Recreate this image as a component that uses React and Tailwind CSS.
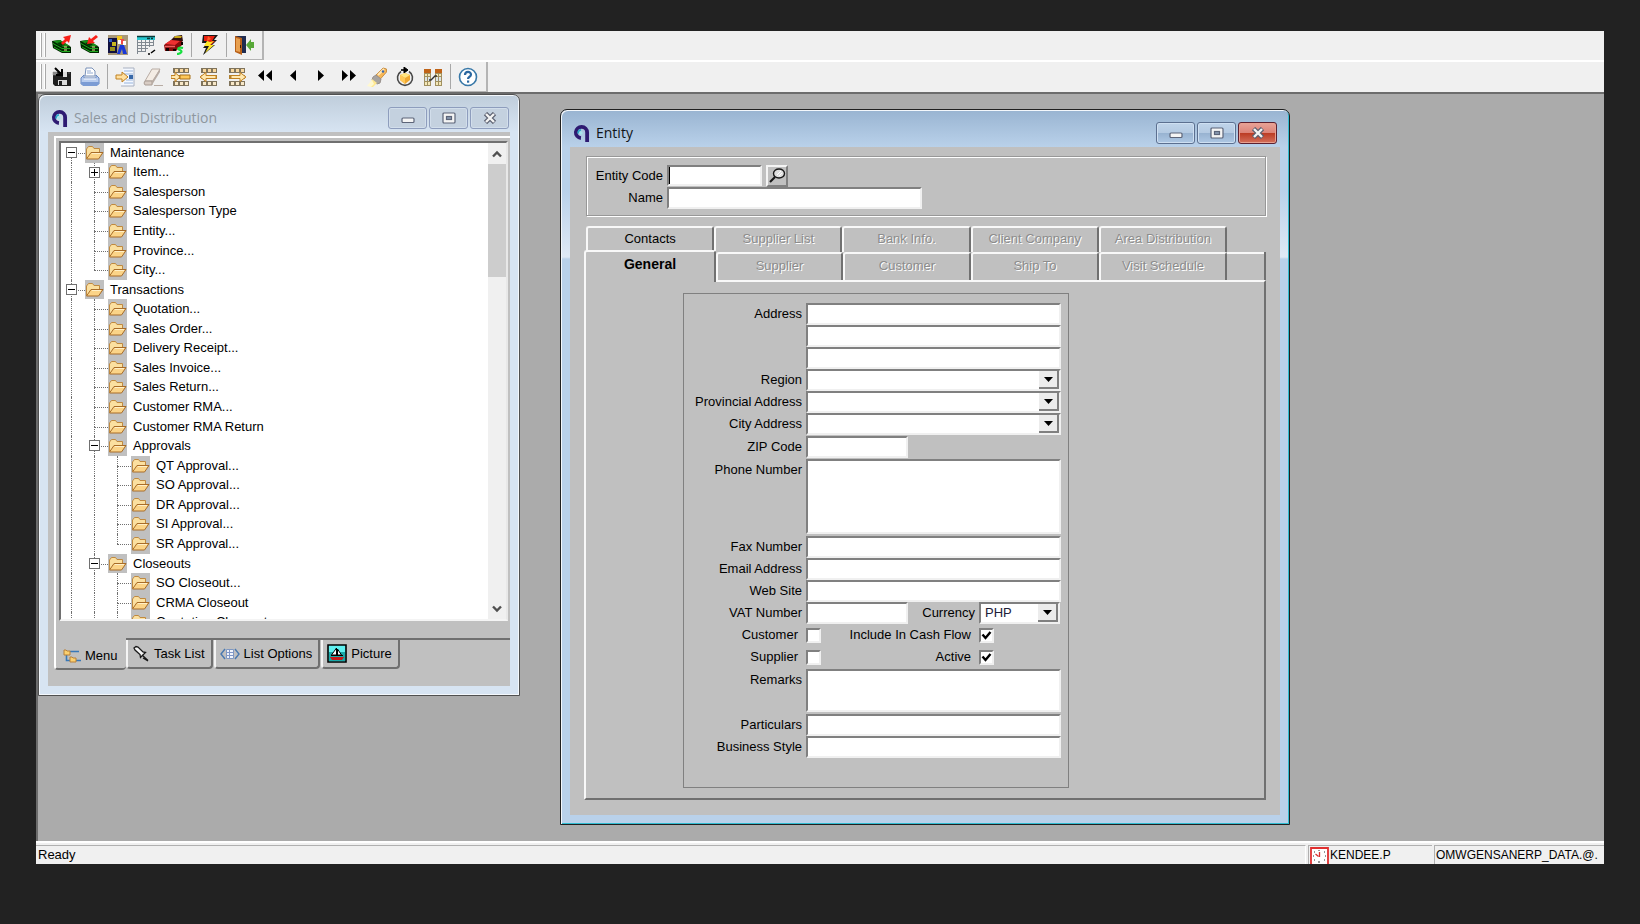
import React, { useState } from 'react';

const TREE = [
  { level: 0, label: 'Maintenance', toggle: '-', first: true },
  { level: 1, label: 'Item...', toggle: '+' },
  { level: 1, label: 'Salesperson' },
  { level: 1, label: 'Salesperson Type' },
  { level: 1, label: 'Entity...' },
  { level: 1, label: 'Province...' },
  { level: 1, label: 'City...', last: true },
  { level: 0, label: 'Transactions', toggle: '-' },
  { level: 1, label: 'Quotation...' },
  { level: 1, label: 'Sales Order...' },
  { level: 1, label: 'Delivery Receipt...' },
  { level: 1, label: 'Sales Invoice...' },
  { level: 1, label: 'Sales Return...' },
  { level: 1, label: 'Customer RMA...' },
  { level: 1, label: 'Customer RMA Return' },
  { level: 1, label: 'Approvals', toggle: '-' },
  { level: 2, label: 'QT Approval...' },
  { level: 2, label: 'SO Approval...' },
  { level: 2, label: 'DR Approval...' },
  { level: 2, label: 'SI Approval...' },
  { level: 2, label: 'SR Approval...', last: true },
  { level: 1, label: 'Closeouts', toggle: '-' },
  { level: 2, label: 'SO Closeout...' },
  { level: 2, label: 'CRMA Closeout' },
  { level: 2, label: 'Quotation Closeout' },
];

/* ---------- toolbar icons ---------- */

const Icon = ({ children, size = 20 }) => (
  <svg width={size} height={size} viewBox="0 0 20 20" fill="none" aria-hidden="true">
    {children}
  </svg>
);

const Cash = () => (
  <>
    <path d="M0 6l8-1 11 7v6h-9L1 13z" fill="#002800" />
    <path d="M1 6l7-1 10 6-7 1z" fill="#189018" />
    <path d="M5 8l4-1 4 3-4 1z" fill="#003800" />
    <path d="M1 8.500l9 5h8M2 12l8 4.500h8" stroke="#20a820" />
    <path d="M12 12h3M12 15h3" stroke="#f0e68c" />
  </>
);

const MoneyOutIcon = () => (
  <Icon>
    <Cash />
    <path d="M9 8l4-4-2-2 8-2-2 8-2-2-4 4z" fill="#f82018" />
  </Icon>
);

const MoneyInIcon = () => (
  <Icon>
    <Cash />
    <path d="M18 2l-5 4 2 2-8 1 2-7 2 2 5-4z" fill="#f82018" />
  </Icon>
);

const WorkerIcon = () => (
  <Icon>
    <path d="M0 0h20v20H0z" fill="#a89878" />
    <path d="M0 3h9v15H0z" fill="#101040" />
    <path d="M1 4h3v3H1z" fill="#3060c0" />
    <path d="M2 12h5v4H2z" fill="#98901c" />
    <path d="M4 7h4v4H4z" fill="#c8b820" />
    <path d="M9 1h5v4H9z" fill="#f0c820" />
    <path d="M12 4h4v5h-4z" fill="#f04848" />
    <path d="M10 5h3v4h-3zM15 6h3v4h-3z" fill="#fff" />
    <path d="M12 10h4l3 9h-4l-1-5-2 5h-3z" fill="#1838d8" />
  </Icon>
);

const SheetIcon = () => (
  <Icon>
    <path d="M1 1h18v4H1z" fill="#28c8d0" />
    <path d="M1 1.500h18M11 3.500h3M15 3.500h2" stroke="#083838" strokeWidth="1.500" />
    <path d="M1.500 5v14M5.500 5v12M9.500 5v12M13.500 5v7M17.500 5v6M1 7.500h17M1 10.500h17M1 13.500h11M1 16.500h9" stroke="#808890" />
    <path d="M12 19h2M15 18l4-3" stroke="#000" strokeWidth="1.500" />
  </Icon>
);

const CarIcon = () => (
  <Icon>
    <path d="M7 5l4-4 7-1 1 6-6 4z" fill="#301010" />
    <path d="M11 1h7l-1 2h-7z" fill="#c8a818" />
    <path d="M0 10l7-5 11 1v4l-6 6H1z" fill="#880c0c" />
    <path d="M1 9l6-4 9 1-5 4z" fill="#f03030" />
    <path d="M1 11.500h10" stroke="#f06060" strokeWidth="1.500" />
    <path d="M2 13h3v3H2zM9 14h3v2H9zM17 7h2v3h-2z" fill="#100000" />
    <path d="M19 13c-5-1-6 1-3 2s1 4-3 4" stroke="#18e040" strokeWidth="2.200" />
  </Icon>
);

const BoltIcon = () => (
  <Icon>
    <path d="M4 0h15l-4 5h3l-5 5h3L4 20l3-7H4l4-5H3z" fill="#181818" />
    <path d="M5 1h11l-3 5h3l-4 4H6l3-4H5z" fill="#e82010" />
    <path d="M8 6L5 11h5l-4 7 9-8h-4l4-4-4 1z" fill="#ffe828" />
    <path d="M9 1l3 3-4 2z" fill="#ff6028" />
  </Icon>
);

const DoorIcon = () => (
  <Icon>
    <path d="M1 1h11v17H6z" fill="#202c50" />
    <path d="M1 1l7 2v17l-7-3z" fill="#b86018" />
    <path d="M2 3l4 1v13l-4-1z" fill="#e8a050" />
    <path d="M6.500 10v3" stroke="#402000" />
    <path d="M20 7v6h-3v3l-5-6 5-6v3z" fill="#58a838" />
  </Icon>
);

const SaveIcon = () => (
  <Icon>
    <path d="M1 5h18v14H3l-2-2z" fill="#202020" />
    <path d="M11 5h4v5h-4zM6 13h9v5H6z" fill="#dcdcdc" />
    <path d="M7 14h3v4H7z" fill="#202020" />
    <path d="M1 5h4v3H1zM16 6h2" fill="#888" stroke="#888" strokeWidth="0.500" />
    <path d="M3 1l6 6M10 2v6H4" stroke="#000" strokeWidth="2" />
  </Icon>
);

const PrintIcon = () => (
  <Icon>
    <path d="M5 9L6 1h6l3 3v5z" fill="#fff" stroke="#7890b8" />
    <path d="M7 4h4M7 6h6" stroke="#90a8d0" />
    <path d="M1 11l3-3v3h12V8l3 3v6H1z" fill="#b8ccee" stroke="#6888c0" />
    <path d="M1 15h18v2l-2 2H3l-2-2z" fill="#7c9cd4" />
    <path d="M4 12h12" stroke="#fff" />
  </Icon>
);

const GotoIcon = () => (
  <Icon>
    <path d="M8 1h11v18H6" fill="#f4f8ff" stroke="#a8b0c0" />
    <path d="M9 4h9M9 7h9M11 13h7M9 16h9" stroke="#98b4dc" />
    <path d="M14 8h4v4h-4z" fill="#3868a8" />
    <path d="M1 8h6V5l6 5-6 5v-3H1z" fill="#ffe0a0" stroke="#c08020" />
  </Icon>
);

const EraserIcon = () => (
  <Icon>
    <path d="M9 2h8l-7 12H2z" fill="#f4ece4" stroke="#b8aca4" />
    <path d="M2 14h7v4H2l-1-2z" fill="#d8ccc4" stroke="#a89c94" />
    <path d="M17 2v3L9 18v-4z" fill="#b8aca4" />
    <path d="M11 18.500h9" stroke="#b8aca4" />
  </Icon>
);

const Grid = () => (
  <>
    <path d="M2 1h16v5H2zM2 14h16v5H2z" fill="#80745c" />
    <path d="M2 8h16v4H2z" fill="#b08030" />
    <path d="M4 2h3v3H4zM9 2h3v3H9zM14 2h3v3h-3z" fill="#f8d8a0" />
    <path d="M4 15h3v3H4zM9 15h3v3H9zM14 15h3v3h-3z" fill="#f8e8c8" />
    <path d="M4 9h3v2H4zM9 9h3v2H9zM14 9h3v2h-3z" fill="#f8d080" />
  </>
);

const RowInsertIcon = () => (
  <Icon>
    <Grid />
    <path d="M9 8h10v4H9z" fill="#ffc858" stroke="#a87018" />
    <path d="M0 8.500h4V5.500l5 4.500-5 4.500v-3H0z" fill="#ffe8b0" stroke="#c08020" />
  </Icon>
);

const RowRemoveIcon = () => (
  <Icon>
    <Grid />
    <path d="M17 8.500H7V5.500L1 10l6 4.500v-3h10z" fill="#ffe8b0" stroke="#c08020" />
  </Icon>
);

const RowAppendIcon = () => (
  <Icon>
    <Grid />
    <path d="M4 8.500h9V5.500l6 4.500-6 4.500v-3H4z" fill="#ffe8b0" stroke="#c08020" />
  </Icon>
);

const FirstIcon = () => (
  <Icon>
    <path d="M9 3v11L3 8.500zM17 3v11l-6-5.500z" fill="#000" />
  </Icon>
);
const PrevIcon = () => (
  <Icon>
    <path d="M13 3v11L7 8.500z" fill="#000" />
  </Icon>
);
const NextIcon = () => (
  <Icon>
    <path d="M7 3v11l6-5.500z" fill="#000" />
  </Icon>
);
const LastIcon = () => (
  <Icon>
    <path d="M3 3v11l6-5.500zM11 3v11l6-5.500z" fill="#000" />
  </Icon>
);

const FlashlightIcon = () => (
  <Icon>
    <path d="M9 8l7-7 3.500 1v3l-7 8z" fill="#f8b858" stroke="#c89048" />
    <path d="M11 8l6-6" stroke="#ffe8b8" strokeWidth="2" />
    <circle cx="16" cy="4.500" r="1.200" fill="#3868b0" />
    <path d="M6 10l3-2 5 4-1 4-3 1-5-4z" fill="#a8a4a0" stroke="#98908c" />
    <path d="M5 12l5 4-4 4H3z" fill="#ffe890" />
    <path d="M0 19l5-6 2 4-3 3z" fill="#fff8d0" />
  </Icon>
);

const RefreshIcon = () => (
  <Icon>
    <path d="M14 4.500a7.500 7.500 0 1 1-8 0" stroke="#484848" strokeWidth="1.600" />
    <path d="M9 0v6M9 0l4 3-4 3" fill="#000" stroke="#000" />
    <path d="M6 3h5" stroke="#000" strokeWidth="1.600" />
    <path d="M10 6l5 2v5l-5 4-5-4V8z" fill="#f0a830" />
    <path d="M10 6l5 2-5 3-5-3z" fill="#ffe480" />
    <path d="M10 11v6l-5-4V8z" fill="#ffc858" />
  </Icon>
);

const LinkTablesIcon = () => (
  <Icon>
    <path d="M1 2h7v17H1zM12 2h7v17h-7z" fill="#a09060" />
    <path d="M1 2h7v4H1zM12 2h7v4h-7z" fill="#c06418" />
    <path d="M2 7h2v2H2zM5 7h2v2H5zM13 7h2v2h-2zM16 7h2v2h-2zM2 15h2v3H2zM5 15h2v3H5zM13 15h2v3h-2zM16 15h2v3h-2z" fill="#f4e8b8" />
    <path d="M2 10h2v4H2zM5 10h2v4H5zM13 10h2v4h-2zM16 10h2v4h-2z" fill="#dce4e8" />
    <path d="M6 13h2l4-4h2" stroke="#303030" strokeWidth="1.300" />
  </Icon>
);

const HelpIcon = () => (
  <Icon>
    <circle cx="10" cy="10" r="8.500" fill="#fff" stroke="#3878a8" strokeWidth="1.600" />
    <path d="M7 8c0-4 6-4 6-.5C13 10 10 9.500 10 12" stroke="#2c68a0" strokeWidth="2.200" />
    <path d="M9 13.500h2.200v2.200H9z" fill="#2c68a0" />
  </Icon>
);

/* ---------- other icons ---------- */

const AppLogo = () => (
  <svg width="17" height="18" viewBox="2 1 15 16" fill="none" aria-hidden="true">
    <path d="M9 13.500A5 5 0 1 1 14.500 8.500V17" stroke="#2e1a72" strokeWidth="3.400" />
    <path d="M6.500 9.500A3 3 0 0 1 9 6.200" stroke="#28a8c8" strokeWidth="1.400" />
    <circle cx="9" cy="9" r="1.500" fill="#a8e4ec" />
  </svg>
);

const FolderIcon = () => (
  <svg width="19" height="16" viewBox="0 0 19 16" fill="none" aria-hidden="true">
    <path d="M1.500 13.500V4l2-2.500h4L9 3.500h5.500v4" fill="#fbe0a0" stroke="#c08a40" />
    <path d="M1.500 14L6 7.500h12L13.500 14z" fill="#fbd488" stroke="#a86c28" />
    <path d="M7 8.500h9" stroke="#fff0c8" />
  </svg>
);

const MenuTreeIcon = () => (
  <svg width="18" height="16" viewBox="0 0 18 16" fill="none" aria-hidden="true">
    <path d="M3.500 6v6.500H7M7 3.500h9M13 12.500h5" stroke="#3878b8" strokeWidth="1.600" />
    <path d="M1 2h2l1 1h3v4H1zM7 9h2l1 1h3v4H7z" fill="#fbd070" stroke="#b88038" />
  </svg>
);

const PinIcon = () => (
  <svg width="18" height="18" viewBox="0 0 18 18" fill="none" aria-hidden="true">
    <path d="M2 3l2-1.500 2 .5 5 5 2.500.5-5 5L8 9.500 3 5z" fill="#f4f4f4" stroke="#181818" strokeWidth="1.300" />
    <path d="M10 10l6 5.500M11 13l5 3" stroke="#181818" strokeWidth="1.300" />
  </svg>
);

const ListIcon = () => (
  <svg width="20" height="14" viewBox="0 0 20 14" fill="none" aria-hidden="true">
    <path d="M5 2L1 7l4 5M15 2l4 5-4 5" stroke="#4878b0" strokeWidth="1.400" />
    <path d="M6.500 2.500h7v9h-7z" fill="#f0f4fc" stroke="#8098c0" />
    <path d="M6 5.500h8M6 8.500h8M9.500 2v10" stroke="#8098c8" />
  </svg>
);

const PictureIcon = () => (
  <svg width="20" height="19" viewBox="0 0 20 19" fill="none" aria-hidden="true">
    <path d="M1 1h18v17H1z" fill="#60f0f0" stroke="#000" strokeWidth="1.600" />
    <path d="M2 8h16v9H2z" fill="#18a8a8" />
    <path d="M9.500 4L4.500 11h5zM10.500 5v6h4z" fill="#fff" stroke="#000" />
    <path d="M4 11.500h12" stroke="#000" />
    <path d="M3 13h14l-2 3H5z" fill="#c81818" />
  </svg>
);

const LensIcon = () => (
  <svg width="18" height="18" viewBox="0 0 18 18" fill="none" aria-hidden="true">
    <ellipse cx="11" cy="6.500" rx="5.500" ry="4.500" fill="#e0e0e0" stroke="#181818" strokeWidth="1.400" />
    <path d="M7 10l-5 5" stroke="#181818" strokeWidth="2.200" />
    <path d="M9 8l4-4M11 9l3-3" stroke="#fff" />
  </svg>
);

const CalendarIcon = () => (
  <svg width="20" height="17" viewBox="0 0 20 17" fill="none" aria-hidden="true">
    <path d="M1 1h17v18H1z" fill="#fff" stroke="#e03030" strokeWidth="1.800" />
    <path d="M9 3v1M9 14v2M3 9h1M15 9h1M4 5h1M14 5h1M4 13h1M14 13h1" stroke="#303030" />
    <path d="M5.500 7l3 2.500M9.500 5v5" stroke="#d83030" strokeWidth="1.300" />
  </svg>
);

/* ---------- window chrome ---------- */

const CaptionGlyph = ({ kind }) => (
  <svg width="14" height="12" viewBox="0 0 14 12" fill="none" aria-hidden="true">
    {kind === 'min' && (
      <rect x="1" y="6" width="12" height="4.500" rx="1" fill="#f4f4f4" stroke="#5c6478" strokeWidth="1.200" />
    )}
    {kind === 'max' && (
      <>
        <rect x="1" y="1" width="12" height="10" rx="1" fill="#f4f4f4" stroke="#5c6478" strokeWidth="1.200" />
        <rect x="4.500" y="4.500" width="5" height="3" fill="#8898b0" stroke="#5c6478" strokeWidth="1.200" />
      </>
    )}
    {kind === 'close' && (
      <>
        <path d="M2.500 1.500l9 9M11.500 1.500l-9 9" stroke="#5c6070" strokeWidth="4.600" />
        <path d="M3 2l8 8M11 2l-8 8" stroke="#f4f4f4" strokeWidth="2.400" />
      </>
    )}
  </svg>
);

const TitleBar = ({ title, active }) => (
  <header className="flex h-[37px] shrink-0 items-center pt-2">
    <AppLogo />
    <h2
      className={`ml-1.5 flex-1 font-['Open_Sans','Noto_Sans',sans-serif] text-sm leading-5 ${
        active ? 'text-[#101418]' : 'text-[#8e979f]'
      }`}
    >
      {title}
    </h2>
    <div className="flex gap-0.5">
      {['min', 'max', 'close'].map((kind) => (
        <button
          key={kind}
          aria-label={kind}
          className={`flex h-[22px] w-[39px] items-center justify-center rounded-[3px] border ${
            !active
              ? 'border-[#8e9dbd] bg-[#c4d1df] shadow-[inset_0_0_0_1px_#d2deeb]'
              : kind === 'close'
              ? 'border-[#5c2030] bg-[linear-gradient(#e8a398_0%,#dd8478_48%,#bb3a22_50%,#d4705c_100%)] shadow-[inset_0_0_0_1px_#e8a090]'
              : 'border-[#5c7090] bg-[linear-gradient(#c0d4ea_0%,#b4cae2_48%,#97b2d0_50%,#aec8e4_100%)] shadow-[inset_0_0_0_1px_#cfe0f2]'
          }`}
        >
          <CaptionGlyph kind={kind} />
        </button>
      ))}
    </div>
  </header>
);

/* ---------- toolbars ---------- */

const Grip = () => (
  <div className="mr-0.5 ml-1 flex gap-0.5 py-0.5">
    <div className="w-0.5 border-r border-[#a8a8a8] bg-white" />
    <div className="w-0.5 border-r border-[#a8a8a8] bg-white" />
  </div>
);

const Separator = () => <div className="mx-[3px] my-0.5 w-px bg-[#a8a8a8]" />;

const Toolbar = ({ label, items }) => (
  <div className="flex">
    <div
      role="toolbar"
      aria-label={label}
      className="flex h-full items-stretch border-r-2 border-b border-[#b4b4b4] pr-1"
    >
      <Grip />
      {items.map(([name, Glyph], i) =>
        Glyph ? (
          <button key={name} aria-label={name} className="flex w-7 items-center justify-center">
            <Glyph />
          </button>
        ) : (
          <Separator key={i} />
        )
      )}
    </div>
  </div>
);

const MAIN_TOOLS = [
  ['Cash out', MoneyOutIcon],
  ['Cash in', MoneyInIcon],
  ['Production', WorkerIcon],
  ['Worksheet', SheetIcon],
  ['Assets', CarIcon],
  [],
  ['Run', BoltIcon],
  [],
  ['Exit', DoorIcon],
];

const EDIT_TOOLS = [
  ['Save', SaveIcon],
  ['Print', PrintIcon],
  [],
  ['Go to', GotoIcon],
  ['Clear', EraserIcon],
  ['Insert row', RowInsertIcon],
  ['Remove row', RowRemoveIcon],
  ['Append row', RowAppendIcon],
  ['First', FirstIcon],
  ['Previous', PrevIcon],
  ['Next', NextIcon],
  ['Last', LastIcon],
  ['Find', FlashlightIcon],
  ['Refresh', RefreshIcon],
  ['Link tables', LinkTablesIcon],
  [],
  ['Help', HelpIcon],
];

/* ---------- Sales and Distribution ---------- */

const TreeRow = ({ item }) => (
  <li className="flex items-stretch whitespace-nowrap">
    {Array.from({ length: item.level }).map((_, i) => (
      <span key={i} className="w-[23px] shrink-0 pl-2.5">
        <span className="block h-full border-l border-dotted border-[#707070]" />
      </span>
    ))}
    <span className="relative w-6 shrink-0">
      {!item.first && (
        <span className="absolute top-0 left-2.5 h-1/2 border-l border-dotted border-[#707070]" />
      )}
      {!item.last && (
        <span className="absolute bottom-0 left-2.5 h-1/2 border-l border-dotted border-[#707070]" />
      )}
      <span className="absolute top-1/2 right-0 left-2.5 border-t border-dotted border-[#707070]" />
      {item.toggle && (
        <button
          aria-label={`Toggle ${item.label}`}
          className="absolute top-1 left-[5px] flex size-[11px] items-center justify-center border border-[#707070] bg-white"
        >
          <svg width="7" height="7" viewBox="0 0 7 7" aria-hidden="true">
            <path d={item.toggle === '+' ? 'M0 3h7v1H0zM3 0h1v7H3z' : 'M0 3h7v1H0z'} fill="#000" />
          </svg>
        </button>
      )}
    </span>
    <span className="flex w-[19px] shrink-0 items-center bg-[#c0c0c0]">
      <FolderIcon />
    </span>
    <span className="flex items-center pl-1.5">{item.label}</span>
  </li>
);

const ScrollArrow = ({ up }) => (
  <button aria-label={up ? 'Scroll up' : 'Scroll down'} className="flex h-[21px] items-center justify-center">
    <svg width="10" height="8" viewBox="0 0 10 8" fill="none" aria-hidden="true">
      <path d={up ? 'M1 6.500l4-4 4 4' : 'M1 1.500l4 4 4-4'} stroke="#505050" strokeWidth="2.400" />
    </svg>
  </button>
);

const NavTab = ({ children }) => (
  <button
    role="tab"
    className="mr-px flex h-[29px] items-center gap-1 rounded-b-[4px] border-r-2 border-b-2 border-l-2 border-r-[#707070] border-b-[#707070] border-l-[#f4f4f4] pr-1.5 pl-1"
  >
    {children}
  </button>
);

const NavigatorWindow = () => (
  <section className="absolute top-0 left-0 flex h-[602px] w-[482px] flex-col rounded-t-[7px] border border-[#505050] bg-[linear-gradient(#bfcddb_0px,#d7e4f2_37px)] px-[9px] pb-[9px] shadow-[inset_1px_1px_0_#f4f8fc,inset_-1px_-1px_0_#f4f8fc]">
    <div className="pr-px pl-[3px]">
      <TitleBar title="Sales and Distribution" />
    </div>
    <div className="flex min-h-0 flex-1 flex-col bg-[#c0c0c0] pt-1 pb-4 pl-1.5">
      <div className="min-h-0 flex-1 border-t-2 border-l-2 border-white pt-[3px] pr-0.5 pb-[17px] pl-[3px]">
        <div className="flex h-full border-2 border-t-[#707070] border-r-[#e8e8e8] border-b-[#f4f4f4] border-l-[#707070] bg-white">
          <div className="min-w-0 flex-1 overflow-hidden">
            <ul className="grid h-[489px] auto-rows-fr">
              {TREE.map((item) => (
                <TreeRow key={item.label} item={item} />
              ))}
            </ul>
          </div>
          <div className="flex w-[18px] flex-col bg-[#f0f0f0]">
            <ScrollArrow up />
            <div className="h-[113px] bg-[#cdcdcd]" />
            <div className="flex-1" />
            <ScrollArrow />
          </div>
        </div>
      </div>
      <div role="tablist" className="flex h-8 items-start">
        <button
          role="tab"
          aria-selected="true"
          className="flex h-8 w-[72px] items-center gap-1 rounded-b-[4px] border-b-2 border-l-2 border-b-[#707070] border-l-white pt-1.5 pl-[7px]"
        >
          <MenuTreeIcon />
          Menu
        </button>
        <div className="flex flex-1 border-t-2 border-[#707070]">
          <NavTab>
            <PinIcon />
            Task List
          </NavTab>
          <NavTab>
            <ListIcon />
            List Options
          </NavTab>
          <NavTab>
            <PictureIcon />
            Picture
          </NavTab>
        </div>
      </div>
    </div>
  </section>
);

/* ---------- Entity ---------- */

const SUNKEN =
  'rounded-none border-2 border-t-[#808080] border-r-[#f0f0f0] border-b-[#f0f0f0] border-l-[#808080] bg-white outline-none';

const Label = ({ htmlFor, children, width = 'w-[118px]', check }) => (
  <label
    htmlFor={htmlFor}
    className={`shrink-0 text-right leading-[22px] whitespace-nowrap ${width} ${check ? 'pr-1' : ''}`}
  >
    {children}
  </label>
);

const TextField = ({ id, label, width = 'w-[255px]' }) => (
  <div className="flex h-[22px] gap-1">
    <Label htmlFor={id}>{label}</Label>
    <input id={id} type="text" aria-label={label ? undefined : id} className={`h-[22px] px-1 ${width} ${SUNKEN}`} />
  </div>
);

const AreaField = ({ id, label, row, height }) => (
  <div className={`flex gap-1 ${row}`}>
    <Label htmlFor={id}>{label}</Label>
    <textarea id={id} className={`w-[255px] resize-none px-1 ${height} ${SUNKEN}`} />
  </div>
);

const Combo = ({ id, width = 'w-[255px]', options = [''] }) => (
  <div className={`relative ${width}`}>
    <select id={id} className={`h-[22px] w-full appearance-none px-1 text-[#202038] ${SUNKEN}`}>
      {options.map((o) => (
        <option key={o}>{o}</option>
      ))}
    </select>
    <span className="pointer-events-none absolute top-0.5 right-0.5 flex h-[18px] w-5 items-center justify-center border-r-2 border-b-2 border-[#808080] bg-[#ececec]">
      <svg width="9" height="5" viewBox="0 0 9 5" aria-hidden="true">
        <path d="M0 0h9L4.500 5z" fill="#000" />
      </svg>
    </span>
  </div>
);

const ComboField = ({ id, label }) => (
  <div className="flex h-[22px] gap-1">
    <Label htmlFor={id}>{label}</Label>
    <Combo id={id} />
  </div>
);

const CheckBox = ({ id, defaultChecked }) => {
  const [checked, setChecked] = useState(!!defaultChecked);
  return (
    <span className="relative block size-[15px]">
      <input
        id={id}
        type="checkbox"
        checked={checked}
        onChange={(e) => setChecked(e.target.checked)}
        className={`block size-[15px] appearance-none ${SUNKEN}`}
      />
      {checked && (
        <svg className="pointer-events-none absolute top-0.5 left-0.5" width="11" height="11" viewBox="0 0 11 11" fill="none" aria-hidden="true">
          <path d="M1.500 4.500L4.500 8l5-6" stroke="#000" strokeWidth="2.400" />
        </svg>
      )}
    </span>
  );
};

const CheckRow = ({ left, right }) => (
  <div className="flex h-[22px] items-center gap-1">
    <Label htmlFor={left} check>
      {left}
    </Label>
    <div className="w-8">
      <CheckBox id={left} />
    </div>
    <Label htmlFor={right} width="w-[133px]" check>
      {right}
    </Label>
    <CheckBox id={right} defaultChecked />
  </div>
);

const TabButton = ({ children, enabled, className = '' }) => (
  <button
    role="tab"
    disabled={!enabled}
    className={`rounded-t-[3px] border-t-2 border-r-2 border-l-2 border-t-[#f8f8f8] border-r-[#707070] border-l-[#f8f8f8] pb-0.5 text-center ${
      enabled ? 'text-black' : 'text-[#8c8c8c] [text-shadow:1px_1px_0_#fff]'
    } ${className}`}
  >
    {children}
  </button>
);

const EntityWindow = () => (
  <section className="absolute top-[15px] left-[522px] flex h-[716px] w-[730px] flex-col rounded-t-[7px] border border-[#202020] bg-[linear-gradient(#99b4d1_0px,#b9d1ea_37px,#b9d1ea_80px,#dfe9f5_147px,#b9d1ea_149px)] px-[9px] pb-[9px] shadow-[inset_1px_1px_0_#f4f8fc,inset_-1px_-1px_0_#30bcd0]">
    <div className="px-[3px]">
      <TitleBar title="Entity" active />
    </div>
    <div className="flex min-h-0 flex-1 flex-col bg-[#c0c0c0] px-[14px] pt-[9px] pb-[15px]">
      <div className="ml-0.5 flex h-[60px] flex-col border border-[#989898] pt-2 shadow-[1px_1px_0_#fff,inset_1px_1px_0_#fff]">
        <div className="flex h-[22px] gap-1">
          <label htmlFor="code" className="w-[76px] text-right leading-[22px]">
            Entity Code
          </label>
          <input id="code" type="text" className={`h-[21px] w-[95px] px-1 shadow-[inset_1px_0_0_#000] ${SUNKEN}`} />
          <button
            aria-label="Look up entity"
            className="flex h-[22px] w-[22px] items-center justify-center border-2 border-t-[#f4f4f4] border-r-[#808080] border-b-[#808080] border-l-[#f4f4f4]"
          >
            <LensIcon />
          </button>
        </div>
        <div className="flex h-[22px] gap-1">
          <label htmlFor="name" className="w-[76px] text-right leading-[22px]">
            Name
          </label>
          <input id="name" type="text" className={`h-[22px] w-[255px] px-1 ${SUNKEN}`} />
        </div>
      </div>

      <div role="tablist" className="mt-2.5">
        <div className="ml-0.5 grid h-[26px] w-[641px] grid-cols-5">
          <TabButton enabled>Contacts</TabButton>
          <TabButton>Supplier List</TabButton>
          <TabButton>Bank Info.</TabButton>
          <TabButton>Client Company</TabButton>
          <TabButton>Area Distribution</TabButton>
        </div>
        <div className="flex h-7 border-r-2 border-[#707070]">
          <TabButton enabled className="z-10 -mt-0.5 -mb-0.5 w-[132px] bg-[#c0c0c0] pb-1.5 text-sm font-bold">
            General
          </TabButton>
          <TabButton className="w-[127px]">Supplier</TabButton>
          <TabButton className="w-32">Customer</TabButton>
          <TabButton className="w-32">Ship To</TabButton>
          <TabButton className="w-32">Visit Schedule</TabButton>
          <div className="flex-1 border-t-2 border-[#f8f8f8]" />
        </div>
      </div>

      <div
        role="tabpanel"
        className="flex-1 border-2 border-t-[#f8f8f8] border-r-[#707070] border-b-[#707070] border-l-[#f8f8f8] pt-[11px] pb-2.5 pl-[97px]"
      >
        <form className="h-full w-[386px] border border-[#808080] pt-[9px]">
          <TextField id="address1" label="Address" />
          <TextField id="address2" />
          <TextField id="address3" />
          <ComboField id="region" label="Region" />
          <ComboField id="province" label="Provincial Address" />
          <ComboField id="city" label="City Address" />
          <div className="py-px">
            <TextField id="zip" label="ZIP Code" width="w-[102px]" />
          </div>
          <AreaField id="phone" label="Phone Number" row="h-[77px]" height="h-[75px]" />
          <TextField id="fax" label="Fax Number" />
          <TextField id="email" label="Email Address" />
          <TextField id="web" label="Web Site" />
          <div className="flex h-[22px] gap-1">
            <Label htmlFor="vat">VAT Number</Label>
            <input id="vat" type="text" className={`h-[22px] w-[102px] px-1 ${SUNKEN}`} />
            <Label htmlFor="currency" width="w-[63px]">
              Currency
            </Label>
            <Combo id="currency" width="w-[81px]" options={['PHP']} />
          </div>
          <CheckRow left="Customer" right="Include In Cash Flow" />
          <CheckRow left="Supplier" right="Active" />
          <div className="pt-px">
            <AreaField id="remarks" label="Remarks" row="h-[45px]" height="h-[43px]" />
          </div>
          <TextField id="particulars" label="Particulars" />
          <TextField id="style" label="Business Style" />
        </form>
      </div>
    </div>
  </section>
);

const StatusBar = () => (
  <footer className="flex h-[23px] gap-0.5 overflow-hidden border-t-2 border-white bg-[#f0f0f0] pt-0.5 whitespace-nowrap">
    <div className="flex flex-1 items-center border-t border-r border-t-[#b0b0b0] border-r-white pl-0.5">Ready</div>
    <div className="flex w-[124px] items-center border-t border-l border-[#b0b0b0] pl-px text-xs">
      <CalendarIcon />
      KENDEE.P
    </div>
    <div className="flex w-[170px] items-center border-t border-l border-[#b0b0b0] pl-px text-xs">
      OMWGENSANERP_DATA.@.
    </div>
  </footer>
);

export default function App() {
  return (
    <div className="flex h-screen min-h-[924px] flex-col bg-[#222222] px-9 pt-[31px] pb-[60px] font-['Liberation_Sans',Arial,sans-serif] text-[13px] leading-4 text-black">
      <div className="grid h-[61px] grid-rows-[29px_32px] bg-[#f0f0f0]">
        <Toolbar label="Modules" items={MAIN_TOOLS} />
        <div className="grid border-t-2 border-white">
          <Toolbar label="Editing" items={EDIT_TOOLS} />
        </div>
      </div>
      <main className="relative flex-1 overflow-hidden border-t-2 border-l-2 border-[#6c6c6c] bg-[#ababab]">
        <NavigatorWindow />
        <EntityWindow />
      </main>
      <StatusBar />
    </div>
  );
}
